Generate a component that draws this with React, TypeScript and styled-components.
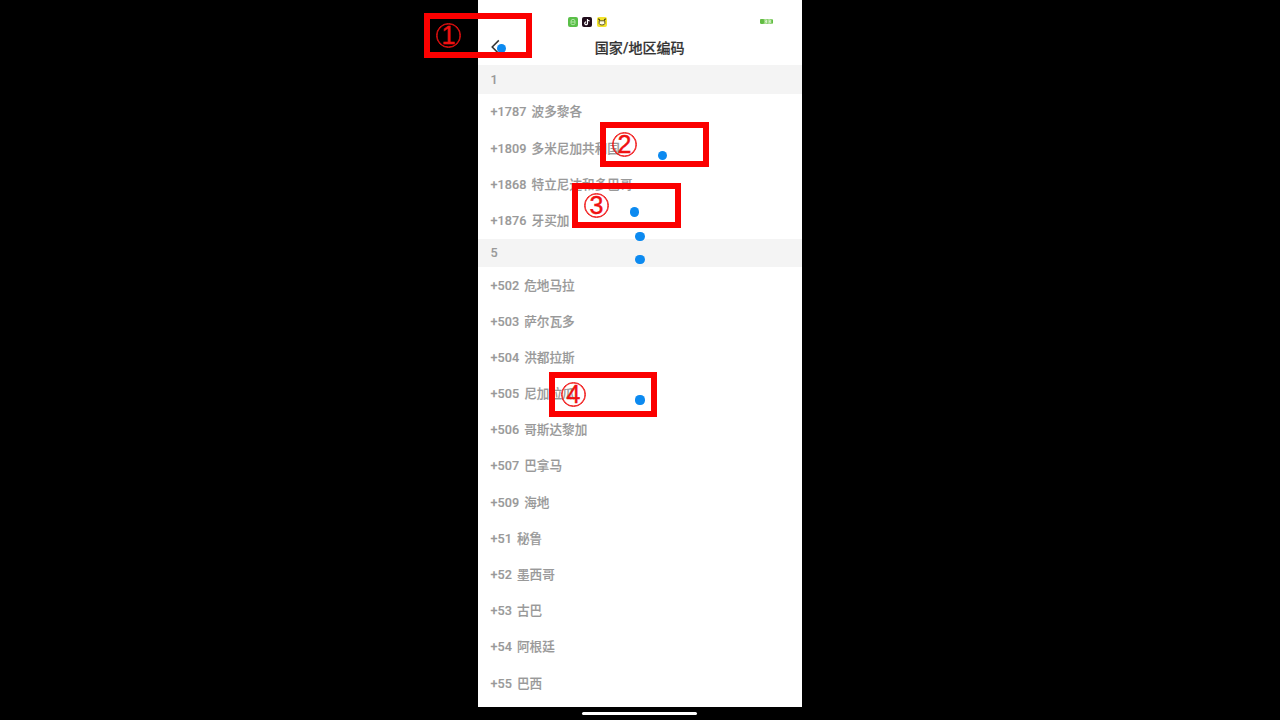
import React from "react";
import styled, { createGlobalStyle } from "styled-components";

const Global = createGlobalStyle`
  * { box-sizing: border-box; }
  html, body { margin: 0; background: #000; overflow: hidden; }
`;

const Stage = styled.div`
  position: relative;
  width: 1280px;
  height: 720px;
  overflow: hidden;
  background: #000;
  display: flex;
  flex-direction: column;
  align-items: center;
  font-family: Roboto, "Noto Sans CJK SC", sans-serif;
`;

const Phone = styled.main`
  width: 324px;
  height: 707.4px;
  background: #fff;
  overflow: hidden;
`;

const StatusBar = styled.div`
  height: 30px;
  padding: 13px 29px 0 89.5px;
  display: flex;
  justify-content: space-between;
  align-items: center;
`;

const AppIcons = styled.div`
  display: flex;
  gap: 4.5px;
  svg { display: block; }
`;

const Battery = styled.svg`
  display: block;
`;

const TitleBar = styled.header`
  height: 35.4px;
  padding: 0 12px;
  display: grid;
  grid-template-columns: 20px 1fr 20px;
  align-items: center;
`;

const Back = styled.svg`
  display: block;
  margin-top: -2px;
`;

const Title = styled.h1`
  margin: 0 0.6px 0 0;
  text-align: center;
  font-size: 14.05px;
  line-height: 20px;
  font-weight: 500;
  color: #333;
  -webkit-text-stroke: 0.2px #333;
`;

const SectionHead = styled.h2`
  margin: 0;
  height: 28.4px;
  padding: 0.5px 0 0 12.5px;
  background: #f4f4f4;
  color: #999;
  font-size: 12.6px;
  line-height: 28px;
  font-weight: 500;
  -webkit-text-stroke: 0.1px #999;
`;

const Row = styled.div`
  height: 36.2px;
  padding: 1px 0 0 12.4px;
  display: flex;
  align-items: center;
  gap: 5px;
  font-size: 12.64px;
  line-height: 18px;
  font-weight: 500;
  color: #999;
  -webkit-text-stroke: 0.15px #999;
  white-space: nowrap;
`;

const Code = styled.span`
  letter-spacing: 0.08px;
`;

const HomeBar = styled.div`
  width: 115px;
  height: 3px;
  margin-top: 4.2px;
  margin-left: -1px;
  border-radius: 2px;
  background: #fff;
`;

const Mark = styled.div<{ $x: number; $y: number; $w: number }>`
  position: absolute;
  left: ${(p) => p.$x}px;
  top: ${(p) => p.$y}px;
  width: ${(p) => p.$w}px;
  height: 45px;
  border: 6px solid #fb0000;
  padding: 0 0 0 6px;
  display: flex;
  align-items: center;
`;

const Ring = styled.span`
  width: 25px;
  height: 25px;
  border: 1px solid #f01010;
  box-shadow: inset 0 0 0 0.6px #f01010;
  border-radius: 50%;
  display: flex;
  align-items: center;
  justify-content: center;
  color: #f01010;
  font-family: "Liberation Sans", sans-serif;
  font-size: 25px;
  line-height: 25px;
  -webkit-text-stroke: 0.4px #f01010;
`;

const Dot = styled.i<{ $x: number; $y: number }>`
  position: absolute;
  left: ${(p) => p.$x - 4.6}px;
  top: ${(p) => p.$y - 4.6}px;
  width: 9.2px;
  height: 9.2px;
  border-radius: 50%;
  background: #0c8af0;
`;

const sections = [
  {
    key: "1",
    rows: [["+1787", "波多黎各"], ["+1809", "多米尼加共和国"], ["+1868", "特立尼达和多巴哥"], ["+1876", "牙买加"]],
  },
  {
    key: "5",
    rows: [
      ["+502", "危地马拉"], ["+503", "萨尔瓦多"], ["+504", "洪都拉斯"], ["+505", "尼加拉瓜"],
      ["+506", "哥斯达黎加"], ["+507", "巴拿马"], ["+509", "海地"], ["+51", "秘鲁"],
      ["+52", "墨西哥"], ["+53", "古巴"], ["+54", "阿根廷"], ["+55", "巴西"],
    ],
  },
];

const marks = [
  { n: 1, x: 424, y: 13, w: 108 },
  { n: 2, x: 600, y: 122, w: 109 },
  { n: 3, x: 572, y: 183, w: 109 },
  { n: 4, x: 549, y: 372, w: 108 },
];

const dots = [[501.6, 48.2], [662.7, 155.4], [634.4, 212], [640, 236.4], [640, 259.3], [640, 400]];

export default function App() {
  return (
    <Stage>
      <Global />
      <Phone>
        <StatusBar>
          <AppIcons>
            <svg width="10" height="10" viewBox="0 0 10 10">
              <rect width="10" height="10" rx="2" fill="#5abf48" />
              <path d="M3 4.2Q3 2.4 5 2.4T7 4.2V6.4Q7 7.7 5 7.7T3 6.4ZM3 5H7" fill="none" stroke="#c5efbd" strokeWidth=".8" />
            </svg>
            <svg width="10" height="10" viewBox="0 0 10 10">
              <rect width="10" height="10" rx="2" fill="#200d1b" />
              <path d="M5.5 2V6.2A1.4 1.4 0 1 1 4.1 4.9M5.5 2Q5.8 3.8 7.6 3.9" fill="none" stroke="#fff" strokeWidth="1.2" />
            </svg>
            <svg width="10" height="10" viewBox="0 0 10 10">
              <rect width="10" height="10" rx="2" fill="#f3e32c" />
              <path d="M2.2 3.8V6.6Q2.4 8 5 8T7.8 6.6V3.8Z" fill="#fffbe0" stroke="#383310" strokeWidth=".8" />
              <path d="M1.4 1.6L2.8 3.4M8.6 1.6L7.2 3.4" stroke="#383310" strokeWidth="1.1" />
            </svg>
          </AppIcons>
          <Battery width="13" height="5" viewBox="0 0 13 5">
            <rect width="12.4" height="5" rx="1.4" fill="#8ed273" />
            <rect width="4" height="5" rx="1.4" fill="#62bd43" />
            <path d="M4.6 1H6.6V4H4.6M5 2.5H6.6M8.2 1H10.2V4H8.2M8.6 2.5H10.2" fill="none" stroke="#e4f7dc" strokeWidth=".8" />
            <rect x="11.6" y=".5" width="1.4" height="4" fill="#62bd43" />
          </Battery>
        </StatusBar>
        <TitleBar>
          <Back width="12" height="16" viewBox="0 0 12 16">
            <path d="M8.8 1.4L2.2 8L8.8 14.6" fill="none" stroke="#333" strokeWidth="1.5" />
          </Back>
          <Title>国家/地区编码</Title>
        </TitleBar>
        {sections.map((s) => (
          <section key={s.key}>
            <SectionHead>{s.key}</SectionHead>
            {s.rows.map(([code, name]) => (
              <Row key={code}>
                <Code>{code}</Code>
                <span>{name}</span>
              </Row>
            ))}
          </section>
        ))}
      </Phone>
      <HomeBar />
      {dots.map(([x, y]) => (
        <Dot key={`${x}-${y}`} $x={x} $y={y} />
      ))}
      {marks.map((m) => (
        <Mark key={m.n} $x={m.x} $y={m.y} $w={m.w}>
          <Ring>{m.n}</Ring>
        </Mark>
      ))}
    </Stage>
  );
}
